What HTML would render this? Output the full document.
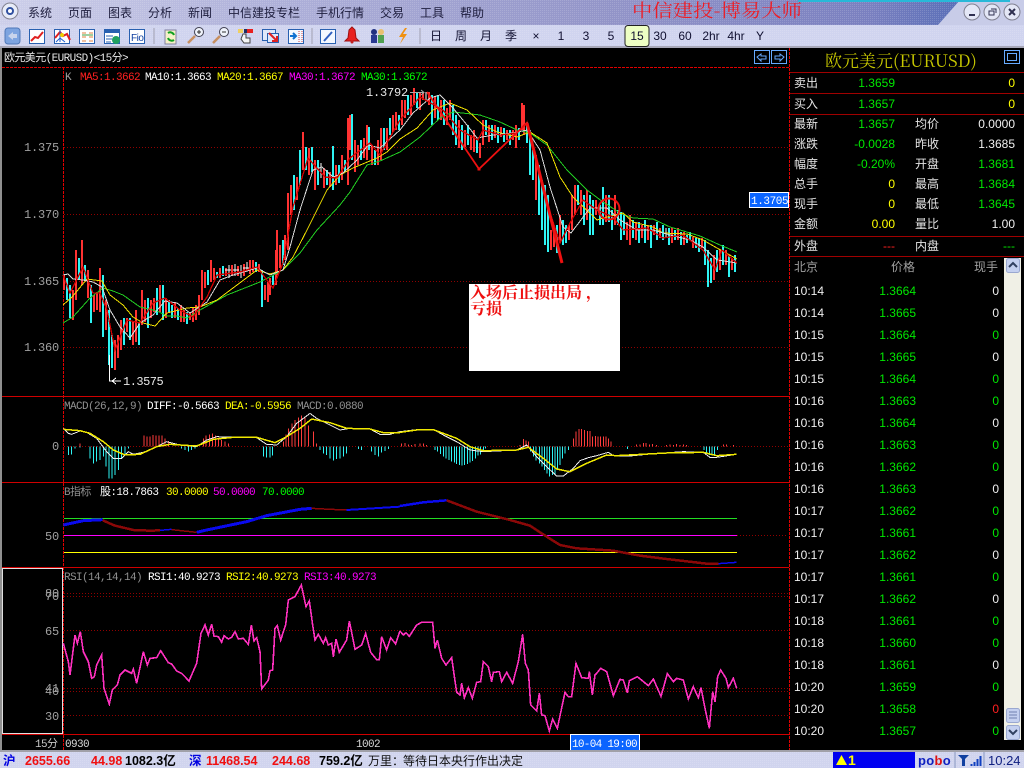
<!DOCTYPE html>
<html><head><meta charset="utf-8"><title>中信建投-博易大师</title>
<style>
html,body{margin:0;padding:0;background:#000;width:1024px;height:768px;overflow:hidden}
svg{display:block}
text{white-space:pre}
.m{font-family:"Liberation Mono","WenQuanYi Zen Hei","Noto Sans CJK SC",monospace;font-size:11px;letter-spacing:-.6px}
.a{font-family:"Liberation Mono",monospace;font-size:12px;letter-spacing:-.2px;fill:#a0a0a0}
.c{font-family:"Liberation Sans","WenQuanYi Zen Hei","Noto Sans CJK SC",sans-serif;font-size:12px}
.n{font-family:"Liberation Sans",sans-serif;font-size:12px}
.e{text-anchor:end}
.l{fill:#e4e4e4}.g{fill:#00e800}.y{fill:#ffff00}.w{fill:#f0f0f0}.r{fill:#ff2020}.h{fill:#a0a0a0}
.s{font-family:"Liberation Sans","Noto Sans CJK SC",sans-serif;font-size:12.5px;font-weight:bold}
.ln{fill:none;vector-effect:non-scaling-stroke;shape-rendering:crispEdges}
</style></head><body>
<svg width="1024" height="768" viewBox="0 0 1024 768" xmlns="http://www.w3.org/2000/svg">
<defs>
<linearGradient id="tb" x1="0" x2="1" y1="0" y2="0"><stop offset="0" stop-color="#cdcfea"/><stop offset=".25" stop-color="#b0b2da"/><stop offset=".6" stop-color="#9294c8"/><stop offset=".85" stop-color="#7a80c0"/><stop offset=".93" stop-color="#5c70b8"/></linearGradient>
<pattern id="dot" width="2" height="2" patternUnits="userSpaceOnUse"><rect width="1" height="1" fill="#fff" opacity=".15"/></pattern>
</defs>
<rect width="1024" height="768" fill="#000"/>
<!-- title bar -->
<rect width="1024" height="25" fill="url(#tb)"/>
<rect width="1024" height="25" fill="url(#dot)"/>
<polygon points="938,25 960,0 1024,0 1024,25" fill="#c8cce8"/>
<rect x="798" y="0" width="212" height="2" fill="#28b8d8"/>
<rect y="25" width="1024" height="22" fill="#d0d4ef"/>
<rect y="25" width="1024" height="22" fill="url(#dot)"/>
<rect y="46" width="1024" height="2" fill="#a8a8b8"/>
<circle cx="10" cy="11" r="8" fill="#e8ecf8" stroke="#808090"/><circle cx="10" cy="11" r="3" fill="#fff" stroke="#3050a0" stroke-width="2"/>
<g class="c" fill="#202040">
<text x="28" y="17">系统</text><text x="68" y="17">页面</text><text x="108" y="17">图表</text><text x="148" y="17">分析</text><text x="188" y="17">新闻</text><text x="228" y="17">中信建投专栏</text><text x="316" y="17">手机行情</text><text x="380" y="17">交易</text><text x="420" y="17">工具</text><text x="460" y="17">帮助</text>
</g>
<text x="632" y="17" font-family="'Noto Serif CJK SC',serif" font-size="18" fill="#ee1c24" textLength="170" lengthAdjust="spacingAndGlyphs">中信建投-博易大师</text>
<g stroke="#808090" fill="#e4e7f6"><circle cx="972" cy="12" r="8"/><circle cx="992" cy="12" r="8"/><circle cx="1012" cy="12" r="8"/></g>
<path d="M969 15h6" stroke="#303050" stroke-width="2"/><path d="M989 11h5v4h-5zM991 9h5v4" stroke="#303050" fill="none"/><path d="M1009 9l6 6M1015 9l-6 6" stroke="#303050" stroke-width="2"/>
<!-- toolbar icons -->
<rect x="5" y="28" width="15" height="16" rx="3" fill="#7da4e0" stroke="#5078b8"/><path d="M8 36l5-4v2h4v4h-4v2z" fill="#c8d4ec"/>
<g fill="#fff" stroke="#2860b0"><rect x="29.5" y="29.5" width="15" height="14"/><rect x="54.5" y="29.5" width="15" height="14"/><rect x="79.5" y="29.5" width="15" height="14"/><rect x="104.5" y="29.5" width="15" height="14"/><rect x="129.5" y="29.5" width="15" height="14"/></g>
<path d="M31 41l4-4 3 1 5-6" stroke="#e02020" stroke-width="2" fill="none"/>
<path d="M55 38l5-6 3 4 4-2 3 6" stroke="#e02020" stroke-width="2" fill="none"/><path d="M60 30v12M56 42l4-4 5 4" stroke="#2060d0" fill="none"/><circle cx="62" cy="35" r="2" fill="#f0d000"/>
<path d="M82 33h4M89 33h4M82 37h4M89 37h4M82 41h4M89 41h4" stroke="#e08040"/><path d="M82 35h11" stroke="#40a040"/>
<rect x="105" y="30" width="14" height="3" fill="#2860b0"/><path d="M106 36h7M106 39h6M106 42h5" stroke="#2860b0"/><circle cx="116" cy="40" r="4" fill="#20a060"/>
<text x="131" y="41" font-family="'Liberation Sans',sans-serif" font-size="10" fill="#1040a0" letter-spacing="-.5">Fio</text>
<rect x="165" y="30" width="11" height="14" fill="#f4f0c8" stroke="#8080a0"/><path d="M168 33a4 4 0 0 1 6 2M174 40a4 4 0 0 1-6-2" stroke="#10a020" stroke-width="2" fill="none"/>
<g fill="#f0f4fc" stroke="#404050"><circle cx="199" cy="32" r="4.500"/><circle cx="224" cy="32" r="4.500"/></g>
<path d="M195 36l-7 7M220 36l-7 7" stroke="#c89060" stroke-width="2.500"/><path d="M197 32h4M199 30v4M222 32h4" stroke="#303030"/>
<rect x="238" y="29" width="5" height="4" fill="#f0d060"/><rect x="244" y="29" width="5" height="4" fill="#203060"/><rect x="247" y="29" width="6" height="4" fill="#e82020"/>
<path d="M243 34h3v4h4v5h-6l-3-4z" fill="#f4f4f4" stroke="#404040"/>
<rect x="262.500" y="29.500" width="13" height="11" fill="#dfe8fa" stroke="#2860b0"/><rect x="267.500" y="33.500" width="11" height="9" fill="#dfe8fa" stroke="#2860b0"/><path d="M269 33l8 8M277 36v5h-5" stroke="#e02020" stroke-width="2" fill="none"/>
<rect x="288.500" y="29.500" width="15" height="14" fill="#f4f8ff" stroke="#2860b0"/><path d="M290 36h5M293 33l3 3-3 3" stroke="#1070d0" stroke-width="2" fill="none"/><path d="M299 31v11M302 31v11" stroke="#d04040" stroke-dasharray="1 1"/>
<rect x="320.500" y="29.500" width="15" height="14" fill="#f4f8ff" stroke="#2860b0"/><path d="M324 41l8-9" stroke="#3060c0" stroke-width="2"/>
<path d="M352 27l3 3 1 8 3 3h-14l3-3 1-8z" fill="#e82020" stroke="#a01010"/><circle cx="352" cy="42" r="1.500" fill="#c02020"/>
<circle cx="374" cy="32" r="3" fill="#203080"/><rect x="371" y="35" width="6" height="8" fill="#283890"/><circle cx="381" cy="32" r="3" fill="#e8c070"/><rect x="378" y="35" width="6" height="8" fill="#50a050"/>
<path d="M405 28l-6 9h4l-3 7 7-10h-4l4-6z" fill="#f09010"/>
<g stroke="#a0a0b0"><path d="M154 28v16M312 28v16M420 28v16"/></g>
<g class="c" fill="#101030" text-anchor="middle">
<text x="436" y="40">日</text><text x="461" y="40">周</text><text x="486" y="40">月</text><text x="511" y="40">季</text><text x="536" y="40">×</text><text x="561" y="40">1</text><text x="586" y="40">3</text><text x="611" y="40">5</text>
<rect x="625" y="25.500" width="24" height="21" rx="3" fill="#eeffc4" stroke="#202020"/>
<text x="637" y="40">15</text><text x="660" y="40">30</text><text x="685" y="40">60</text><text x="711" y="40">2hr</text><text x="736" y="40">4hr</text><text x="760" y="40">Y</text>
</g>
<!-- chart frame -->
<rect x="0" y="48" width="2" height="703" fill="#909090"/>
<text x="4" y="61" class="m" fill="#e8e8e8">欧元美元(EURUSD)&lt;15分&gt;</text>
<g fill="none" stroke="#66aaff"><rect x="754.500" y="50.500" width="15" height="13"/><rect x="771.500" y="50.500" width="15" height="13"/><rect x="1004.500" y="50.500" width="15" height="13"/><rect x="1007.500" y="53.500" width="9" height="7"/>
<path d="M757 57l4-3v2h5v3h-5v2zM784 57l-4-3v2h-5v3h5v2z"/></g>
<g stroke="#e00000" stroke-dasharray="3 1" shape-rendering="crispEdges">
<path d="M2 67.500H789M63.500 67V750M789.500 48V750"/>
</g>
<g stroke="#d00000" shape-rendering="crispEdges"><path d="M2 396.500H789M2 482.500H789M2 567.500H789M2 734.500H789"/></g>
<g stroke="#900000" stroke-dasharray="1 2" shape-rendering="crispEdges"><path d="M64 147.500H788M64 214.500H788M64 281.500H788M64 347.500H788M64 446.500H788M737 535.500H788M64 593.500H788M64 596.500H788M64 630.500H788M64 688.500H788M64 691.500H788M64 715.500H788"/></g>
<!-- axis labels -->
<text x="24" y="151" class="a">1.375</text><text x="24" y="218" class="a">1.370</text><text x="24" y="285" class="a">1.365</text><text x="24" y="351" class="a">1.360</text>
<text x="52" y="450" class="a">0</text><text x="45" y="540" class="a">50</text>
<text x="45" y="597" class="a">80</text><text x="45" y="600" class="a">70</text><text x="45" y="635" class="a">65</text><text x="45" y="692" class="a">41</text><text x="45" y="695" class="a">40</text><text x="45" y="720" class="a">30</text>
<!-- candles -->
<path fill="none" stroke="#ff3232" stroke-width="2" shape-rendering="crispEdges" d="M64 275V290M73 290V320M76 250V300M82 240V285M88 270V298M94 295V312M97 292V310M100 268V312M106 300V330M115 340V370M118 335V358M121 320V350M127 318V332M133 322V345M136 310V342M142 290V325M145 300V322M151 300V318M154 298V312M160 285V312M166 298V318M175 302V318M181 305V322M184 310V322M190 313V320M193 308V322M196 305V320M199 295V315M202 270V300M205 272V288M211 260V282M214 268V280M220 268V278M226 268V276M232 265V276M238 266V276M244 264V276M250 260V274M253 260V272M259 264V272M265 285V300M268 282V302M270 278V295M276 250V285M277 230V275M280 245V268M285 235V260M288 193V250M291 185V215M297 177V200M303 132V170M309 148V175M315 160V190M324 168V188M330 172V187M336 165V185M342 155V180M348 118V185M350 115V150M355 140V172M358 145V165M364 138V158M367 125V160M372 145V165M378 140V165M381 128V160M387 128V150M393 115V132M396 112V130M402 100V125M405 100V118M411 95V115M414 88V105M420 93V110M423 92V100M429 92V105M435 97V118M441 100V120M447 108V125M450 100V120M459 120V148M465 130V147M471 135V150M474 130V152M480 143V158M483 120V145M489 125V142M495 125V138M501 127V137M507 130V140M513 130V140M516 125V148M522 103V130M524 105V135M536 155V200M551 230V250M554 228V247M560 215V243M569 225V240M572 195V230M575 185V215M581 190V215M587 190V220M596 200V215M606 195V222M615 195V225M627 222V240M630 215V245M636 222V240M642 225V238M648 225V240M654 225V235M660 228V238M672 228V243M678 228V240M684 232V245M693 237V248M702 238V248M714 255V280M720 250V270M726 250V265M732 258V270"/>
<path fill="none" stroke="#2ef4f4" stroke-width="2" shape-rendering="crispEdges" d="M67 278V300M70 285V318M79 258V280M85 265V280M91 285V323M103 275V337M109 310V365M112 335V368M124 318V345M130 318V340M139 322V345M148 298V328M157 288V315M163 285V320M169 300V312M172 305V318M178 308V320M187 312V324M208 270V285M217 272V278M223 266V276M256 262V272M262 270V307M273 275V285M283 240V265M294 175V210M300 150V185M306 147V170M312 147V172M318 160V185M327 170V185M333 146V190M339 165V183M345 160V172M352 114V160M361 140V160M369 127V150M375 150V165M384 128V150M390 118V135M399 115V130M408 95V115M417 92V108M432 95V125M438 95V120M444 100V125M453 105V135M456 115V145M462 125V150M468 125V145M477 140V153M486 120V135M492 125V140M498 127V143M504 128V142M510 130V145M519 128V140M527 122V143M530 130V175M533 150V180M539 165V215M542 180V230M545 185V245M548 195V252M557 225V253M563 220V245M566 225V243M578 185V205M584 195V225M590 195V235M593 200V235M600 205V225M603 187V225M609 195V222M612 210V230M618 210V225M621 212V240M624 215V235M633 220V238M639 222V243M645 220V243M651 225V248M657 222V240M663 225V240M669 228V245M675 230V240M681 232V245M687 235V243M690 232V240M696 238V248M699 238V252M705 240V265M708 250V287M711 258V283M717 250V272M723 245V265M729 255V277M735 255V272"/>
<path fill="none" stroke="#fff" shape-rendering="crispEdges" d="M109.500 355V381H121M116 378l-4 3 4 3M229 265V278M235 264V276M241 265V278M247 262V272M321 163V178M426 92V100M666 228V238M225 270h6M233 270h6M243 268h6"/>
<path fill="none" stroke="#aaa" d="M410 92.500H424M421 90l3 2.500-3 2.500"/>
<!-- MAs -->
<polyline class="ln" stroke="#22cc22" points="63,323 73,317 90,298 103,288 113,291 123,295 140,307 157,311 167,316 177,316 187,318 200,310 227,295 260,282 283,270 300,253 317,230 340,205 350,192 367,165 380,161 400,152 420,137 440,118 453,112 480,115 500,122 517,130 530,133 547,145 567,170 587,190 603,202 620,213 633,218 653,219 670,227 700,236 720,245 737,252"/>
<polyline class="ln" stroke="#f0e000" points="63,305 72,297 87,279 102,281 110,295 123,305 133,317 143,323 155,326 167,313 187,308 200,307 217,300 233,288 257,270 270,274 283,270 293,257 307,230 327,190 340,175 353,168 377,158 387,152 400,139 417,128 433,110 450,103 467,110 483,125 497,132 517,137 530,132 547,143 560,177 573,197 597,220 607,217 623,213 633,222 653,227 663,233 687,234 703,240 717,248 737,259"/>
<polyline class="ln" stroke="#d8d8d8" points="63,275 68,274 73,279 83,280 93,282 102,287 110,310 120,327 130,338 140,323 153,315 165,301 177,303 190,313 207,302 220,280 233,275 257,268 270,275 283,270 290,247 300,210 313,170 322,167 333,177 343,173 357,160 368,145 380,148 400,130 413,113 430,98 440,95 453,108 467,125 477,138 493,135 513,133 527,130 540,150 550,187 563,227 571,233 590,208 607,208 620,220 637,230 653,230 670,235 690,240 703,247 717,260 737,263"/>
<polyline class="ln" stroke="#d00000" stroke-width="1.300" points="63,275 70,293 83,267 93,293 100,293 107,310 115,350 127,320 140,323 153,303 165,298 180,310 193,317 207,297 217,275 240,272 257,267 273,288 283,263 293,207 308,158 325,177 337,178 350,158 370,143 380,155 400,120 420,97 443,110 460,130 478,140 483,130 500,135 517,133 527,122 537,160 550,213 560,243 570,223 583,200 597,210 613,217 623,230 647,228 663,238 683,235 703,250 715,270 722,250 737,263"/>
<!-- annotation zig-zag -->
<polyline fill="none" stroke="#ee1010" stroke-width="1.800" points="427,92 479,169 527,123"/>
<path d="M527 123L562 263" stroke="#ee1010" stroke-width="3" fill="none"/>
<rect x="477.500" y="167.500" width="3" height="3" fill="#ee1010"/>
<circle cx="609" cy="209" r="10.500" fill="none" stroke="#ee1010" stroke-width="2"/>
<rect x="469" y="284" width="151" height="87" fill="#fff"/>
<g font-family="'Noto Serif CJK SC',serif" font-size="16" font-weight="bold" fill="#ee1010"><text x="470" y="298">入场后止损出局</text><text x="586" y="298">，</text><text x="470" y="314">亏损</text></g>
<rect x="749.500" y="192.500" width="39" height="15" fill="#0a64ff" stroke="#fff"/>
<text x="751" y="204" class="m" fill="#fff" style="letter-spacing:-.4px">1.3705</text>
<text x="366" y="96" class="a" style="fill:#e8e8e8">1.3792</text>
<text x="123" y="385" class="a" style="fill:#e8e8e8;letter-spacing:-.5px">1.3575</text>
<!-- legends -->
<g class="m">
<text x="65" y="80" class="h">K</text><text x="80" y="80" fill="#ff2020">MA5:1.3662</text><text x="145" y="80" fill="#fff">MA10:1.3663</text><text x="217" y="80" fill="#ffff00">MA20:1.3667</text><text x="289" y="80" fill="#ff00ff">MA30:1.3672</text><text x="361" y="80" fill="#00ff00">MA30:1.3672</text>
<text x="64" y="409" fill="#909090">MACD(26,12,9)</text><text x="147" y="409" fill="#fff">DIFF:-0.5663</text><text x="225" y="409" fill="#ffff00">DEA:-0.5956</text><text x="297" y="409" fill="#909090">MACD:0.0880</text>
<text x="64" y="495" fill="#909090">B指标</text><text x="100" y="495" fill="#fff">股:18.7863</text><text x="166" y="495" fill="#ffff00">30.0000</text><text x="213" y="495" fill="#ff00ff">50.0000</text><text x="262" y="495" fill="#00ff00">70.0000</text>
<text x="64" y="580" fill="#909090">RSI(14,14,14)</text><text x="148" y="580" fill="#fff">RSI1:40.9273</text><text x="226" y="580" fill="#ffff00">RSI2:40.9273</text><text x="304" y="580" fill="#ff00ff">RSI3:40.9273</text>
</g>
<!-- MACD left -->
<g transform="translate(0,395) scale(.33333)">
<path class="ln" stroke="#2ef4f4" d="M205 154V180M215 154V178M225 154V160M240 154V158M270 154V190M280 154V205M290 154V200M300 154V195M310 154V185M318 154V215M327 154V250M336 154V250M345 154V240M355 154V225M365 154V190M375 154V180M385 154V160M545 154V160M555 154V165M565 154V170M575 154V165M585 154V160M790 154V185M800 154V188M810 154V188M818 154V182M960 154V165M970 154V175M980 154V180M990 154V190M1000 154V197M1010 154V192M1020 154V190M1030 154V185M1040 154V175M1075 154V162M1085 154V165M1115 154V170M1125 154V180M1135 154V185M1145 154V172M1155 154V168M1165 154V162"/>
<path class="ln" stroke="#ff3c3c" d="M240 146V154M432 122V154M441 124V154M450 124V154M459 120V154M468 122V154M477 122V154M486 122V154M495 130V154M505 138V154M610 130V154M618 122V154M628 118V154M637 116V154M646 122V154M655 128V154M665 135V154M675 140V154M685 146V154M850 140V154M858 118V154M866 100V154M876 85V154M885 75V154M895 68V154M905 62V154M915 65V154M925 92V154M940 110V154M950 146V154"/>
<polyline class="ln" stroke="#f0f0f0" points="190,100 205,115 215,118 240,108 260,112 290,130 320,170 340,190 365,190 385,170 400,178 430,172 470,155 500,140 540,150 590,155 620,135 650,125 700,127 770,128 800,148 830,150 860,125 890,85 930,55 950,70 990,90 1020,105 1050,100 1110,102 1140,118 1170,118 1200,110"/>
<polyline class="ln" stroke="#f0e800" stroke-width="1.500" points="190,103 240,107 270,115 310,140 340,165 375,180 420,178 470,155 510,148 590,153 640,133 700,127 770,127 825,143 860,125 900,100 935,72 990,83 1040,100 1110,102 1150,113 1200,113"/>
</g>
<!-- MACD right -->
<g transform="translate(400,395) scale(.33333)">
<path class="ln" stroke="#ff3c3c" d="M5 146V154M15 144V154M25 148V154M35 150V154M45 147V154M60 145V154M70 146V154M80 150V154M360 150V154M370 132V154M378 137V154M385 140V154M520 130V154M528 110V154M537 102V154M545 102V154M553 105V154M562 108V154M570 108V154M578 125V154M586 123V154M594 125V154M602 124V154M610 125V154M618 125V154M625 130V154M633 140V154M710 148V154M720 148V154M730 144V154M738 144V154M748 148V154M758 147V154M770 150V154M800 150V154M810 148V154M820 150V154M830 147V154M840 150V154M850 148V154M860 150V154M970 149V154M980 148V154M1000 150V154"/>
<path class="ln" stroke="#2ef4f4" d="M105 154V165M113 154V170M121 154V177M130 154V185M138 154V190M147 154V195M155 154V200M163 154V203M170 154V207M178 154V210M186 154V212M194 154V210M202 154V207M210 154V202M218 154V198M226 154V190M234 154V182M242 154V178M250 154V170M256 154V160M392 154V170M400 154V185M408 154V197M418 154V205M426 154V215M434 154V225M441 154V235M449 154V245M457 154V240M465 154V238M473 154V222M480 154V210M488 154V190M495 154V175M505 154V165M682 154V162M912 154V165M920 154V175M928 154V180M936 154V182M944 154V180M952 154V165"/>
<polyline class="ln" stroke="#f0f0f0" points="0,110 50,104 100,103 130,120 170,140 210,165 250,170 350,165 380,150 410,185 440,215 470,243 490,243 520,220 540,197 565,188 590,182 625,172 640,182 690,183 760,176 850,170 910,172 930,187 950,187 1010,178"/>
<polyline class="ln" stroke="#f0e800" stroke-width="1.500" points="0,112 50,105 100,104 170,130 210,155 250,167 350,165 385,157 430,190 470,222 510,230 560,205 620,180 650,182 800,174 910,172 950,182 1010,178"/>
</g>
<!-- B indicator -->
<g shape-rendering="crispEdges"><path d="M64 518.500H737" stroke="#22dd22"/><path d="M64 535.500H737" stroke="#ff00ff"/><path d="M64 552.500H737" stroke="#ffff00"/></g>
<g transform="translate(0,395) scale(.33333)">
<polyline class="ln" stroke="#0a0aee" stroke-width="3" points="190,390 250,377 308,374"/>
<polyline class="ln" stroke="#8a0808" stroke-width="2.500" points="308,376 345,392 400,405 450,407 480,406"/>
<polyline class="ln" stroke="#0a0aee" stroke-width="1.500" points="480,406 515,403"/>
<polyline class="ln" stroke="#8a0808" stroke-width="1.500" points="515,404 590,412"/>
<polyline class="ln" stroke="#0a0aee" stroke-width="3" points="590,412 620,405 740,380 800,362 900,343 935,340"/>
<polyline class="ln" stroke="#8a0808" stroke-width="1.500" points="935,340 990,343 1040,345"/>
<polyline class="ln" stroke="#0a0aee" stroke-width="2" points="1040,345 1200,335"/>
</g>
<g transform="translate(400,395) scale(.33333)">
<polyline class="ln" stroke="#0a0aee" stroke-width="2.500" points="0,333 70,322 140,316"/>
<polyline class="ln" stroke="#8a0808" stroke-width="2.500" points="140,316 230,350 330,375 390,392 440,425 480,450 530,460 640,467 720,482 800,492 920,506 955,506"/>
<polyline class="ln" stroke="#0a0aee" stroke-width="1.500" points="955,506 1010,502"/>
</g>
<!-- RSI -->
<rect x="2.500" y="568.500" width="60" height="165" fill="none" stroke="#e0e0e0"/>
<g transform="translate(0,565) scale(.33333)">
<polyline class="ln" stroke="#ff30c0" stroke-width="1.600" points="190,235 205,290 210,330 225,210 232,235 241,200 250,260 265,290 275,340 283,335 290,300 305,270 312,370 328,417 337,375 352,360 360,330 375,315 395,325 400,312 410,355 430,260 442,300 450,280 470,278 482,257 505,293 515,297 530,318 545,325 567,348 590,295 603,205 615,180 625,210 635,177 642,213 655,215 665,232 672,212 685,222 695,217 705,200 715,222 730,220 745,238 754,180 762,228 770,218 780,260 785,372 805,345 810,317 818,315 825,190 832,182 842,225 857,180 865,105 885,95 904,60 918,125 928,108 938,180 945,225 955,208 970,235 977,218 985,240 995,235 1000,275 1008,222 1018,262 1040,225 1048,168 1065,253 1085,240 1097,205 1112,262 1130,284 1138,284 1145,215 1160,255 1172,218 1187,237 1200,198"/>
</g>
<g transform="translate(400,565) scale(.33333)">
<polyline class="ln" stroke="#ff30c0" stroke-width="1.600" points="0,198 10,210 18,203 28,214 50,180 65,172 98,172 105,250 112,225 125,280 138,300 155,278 170,382 180,390 185,355 193,398 205,368 217,400 230,352 242,350 250,290 265,305 275,350 280,322 298,320 305,350 320,322 338,355 355,290 368,208 376,295 385,315 392,420 410,438 418,385 425,450 435,452 448,498 458,462 472,490 495,382 505,395 515,395 528,295 545,338 565,340 568,320 577,390 585,330 590,325 602,310 620,320 640,392 660,343 670,345 682,384 688,347 712,335 745,362 760,342 783,394 802,326 820,350 830,340 850,345 865,402 880,365 895,398 903,368 915,430 928,490 938,380 945,410 953,335 962,315 978,340 985,368 1000,340 1010,370"/>
</g>
<!-- time axis -->
<text x="35" y="747" class="m" fill="#c8c8c8">15分</text>
<text x="65" y="747" class="m" fill="#d8d8d8">0930</text>
<text x="356" y="747" class="m" fill="#d8d8d8">1002</text>
<rect x="570.500" y="734.500" width="69" height="16" fill="#0a64ff" stroke="#fff"/>
<text x="572" y="747" class="m" fill="#fff" style="letter-spacing:-.7px">10-04 19:00</text>
<!-- right panel -->
<g stroke="#a00000" shape-rendering="crispEdges"><path d="M790 72.500H1024M790 93.500H1024M790 114.500H1024M790 236.500H1024M790 256.500H1024"/></g>
<text x="825" y="67" font-family="'Noto Serif CJK SC','Liberation Serif',serif" font-size="17" fill="#c8c800">欧元美元(EURUSD)</text>
<g class="c l">
<text x="794" y="87">卖出</text><text x="794" y="108">买入</text><text x="794" y="128">最新</text><text x="794" y="148">涨跌</text><text x="794" y="168">幅度</text><text x="794" y="188">总手</text><text x="794" y="208">现手</text><text x="794" y="228">金额</text><text x="794" y="250">外盘</text>
<text x="915" y="128">均价</text><text x="915" y="148">昨收</text><text x="915" y="168">开盘</text><text x="915" y="188">最高</text><text x="915" y="208">最低</text><text x="915" y="228">量比</text><text x="915" y="250">内盘</text>
</g>
<g class="n e">
<text x="895" y="87" class="n e g">1.3659</text><text x="895" y="108" class="n e g">1.3657</text><text x="895" y="128" class="n e g">1.3657</text><text x="895" y="148" class="n e g">-0.0028</text><text x="895" y="168" class="n e g">-0.20%</text><text x="895" y="188" class="n e y">0</text><text x="895" y="208" class="n e y">0</text><text x="895" y="228" class="n e y">0.00</text><text x="895" y="250" class="n e r">---</text>
<text x="1015" y="87" class="n e y">0</text><text x="1015" y="108" class="n e y">0</text><text x="1015" y="128" class="n e w">0.0000</text><text x="1015" y="148" class="n e w">1.3685</text><text x="1015" y="168" class="n e g">1.3681</text><text x="1015" y="188" class="n e g">1.3684</text><text x="1015" y="208" class="n e g">1.3645</text><text x="1015" y="228" class="n e w">1.00</text><text x="1015" y="250" class="n e g">---</text>
</g>
<text x="794" y="271" class="c h">北京</text><text x="891" y="271" class="c h">价格</text><text x="974" y="271" class="c h">现手</text>
<g class="n">
<text x="794" y="295" class="n w">10:14</text><text x="916" y="295" class="n e g">1.3664</text><text x="999" y="295" class="n e w">0</text>
<text x="794" y="317" class="n w">10:14</text><text x="916" y="317" class="n e g">1.3665</text><text x="999" y="317" class="n e w">0</text>
<text x="794" y="339" class="n w">10:15</text><text x="916" y="339" class="n e g">1.3664</text><text x="999" y="339" class="n e g">0</text>
<text x="794" y="361" class="n w">10:15</text><text x="916" y="361" class="n e g">1.3665</text><text x="999" y="361" class="n e w">0</text>
<text x="794" y="383" class="n w">10:15</text><text x="916" y="383" class="n e g">1.3664</text><text x="999" y="383" class="n e g">0</text>
<text x="794" y="405" class="n w">10:16</text><text x="916" y="405" class="n e g">1.3663</text><text x="999" y="405" class="n e g">0</text>
<text x="794" y="427" class="n w">10:16</text><text x="916" y="427" class="n e g">1.3664</text><text x="999" y="427" class="n e w">0</text>
<text x="794" y="449" class="n w">10:16</text><text x="916" y="449" class="n e g">1.3663</text><text x="999" y="449" class="n e g">0</text>
<text x="794" y="471" class="n w">10:16</text><text x="916" y="471" class="n e g">1.3662</text><text x="999" y="471" class="n e g">0</text>
<text x="794" y="493" class="n w">10:16</text><text x="916" y="493" class="n e g">1.3663</text><text x="999" y="493" class="n e w">0</text>
<text x="794" y="515" class="n w">10:17</text><text x="916" y="515" class="n e g">1.3662</text><text x="999" y="515" class="n e g">0</text>
<text x="794" y="537" class="n w">10:17</text><text x="916" y="537" class="n e g">1.3661</text><text x="999" y="537" class="n e g">0</text>
<text x="794" y="559" class="n w">10:17</text><text x="916" y="559" class="n e g">1.3662</text><text x="999" y="559" class="n e w">0</text>
<text x="794" y="581" class="n w">10:17</text><text x="916" y="581" class="n e g">1.3661</text><text x="999" y="581" class="n e g">0</text>
<text x="794" y="603" class="n w">10:17</text><text x="916" y="603" class="n e g">1.3662</text><text x="999" y="603" class="n e w">0</text>
<text x="794" y="625" class="n w">10:18</text><text x="916" y="625" class="n e g">1.3661</text><text x="999" y="625" class="n e g">0</text>
<text x="794" y="647" class="n w">10:18</text><text x="916" y="647" class="n e g">1.3660</text><text x="999" y="647" class="n e g">0</text>
<text x="794" y="669" class="n w">10:18</text><text x="916" y="669" class="n e g">1.3661</text><text x="999" y="669" class="n e w">0</text>
<text x="794" y="691" class="n w">10:20</text><text x="916" y="691" class="n e g">1.3659</text><text x="999" y="691" class="n e g">0</text>
<text x="794" y="713" class="n w">10:20</text><text x="916" y="713" class="n e g">1.3658</text><text x="999" y="713" class="n e r">0</text>
<text x="794" y="735" class="n w">10:20</text><text x="916" y="735" class="n e g">1.3657</text><text x="999" y="735" class="n e g">0</text>
</g>
<!-- scrollbar -->
<rect x="1004" y="258" width="17" height="482" fill="#f0f0e6"/>
<g fill="#c4d0f0" stroke="#9aa8d0"><rect x="1006.500" y="258.500" width="13" height="14" rx="2"/><rect x="1006.500" y="708.500" width="13" height="14" rx="2"/><rect x="1006.500" y="725.500" width="13" height="14" rx="2"/></g>
<path d="M1009 267l4-4 4 4M1009 730l4 4 4-4" fill="none" stroke="#304060" stroke-width="2"/>
<path d="M1009 712h8M1009 715h8M1009 718h8" stroke="#7080b0"/>
<!-- status bar -->
<rect y="751" width="1024" height="17" fill="#d0d4ee"/>
<rect y="751" width="1024" height="17" fill="url(#dot)"/>
<rect y="750" width="1024" height="2" fill="#a0a0a8"/>
<g class="s">
<text x="3" y="765" fill="#0000e0">沪</text><text x="25" y="765" fill="#f01010">2655.66</text><text x="91" y="765" fill="#f01010">44.98</text><text x="125" y="765" fill="#000">1082.3亿</text>
<text x="189" y="765" fill="#0000e0">深</text><text x="206" y="765" fill="#f01010">11468.54</text><text x="272" y="765" fill="#f01010">244.68</text><text x="319" y="765" fill="#000">759.2亿</text>
</g>
<text x="368" y="765" class="c" fill="#101010">万里：</text><text x="403" y="765" class="c" fill="#101010">等待日本央行作出决定</text>
<rect x="833" y="752" width="82" height="16" fill="#0000f0"/>
<polygon points="836,765 847,765 841.500,755" fill="#ffff00"/>
<text x="848" y="765" class="s" fill="#ffff00" style="font-size:14px">1</text>
<text x="918" y="765" font-family="'Liberation Sans',sans-serif" font-size="13" font-weight="bold" fill="#1020c0" letter-spacing=".3">po<tspan fill="#e01010">b</tspan>o</text>
<path d="M955 752v16M984 752v16" stroke="#8898c0"/>
<path d="M958 755h11l-4 4v7h-3v-7z" fill="#1040a0"/><path d="M971.500 766v-2M974.500 766v-4M977.500 766v-7M980.500 766v-10" stroke="#1040c0" stroke-width="2"/>
<text x="988" y="765" class="n" fill="#102080" style="font-size:13px">10:24</text>
</svg>
</body></html>
